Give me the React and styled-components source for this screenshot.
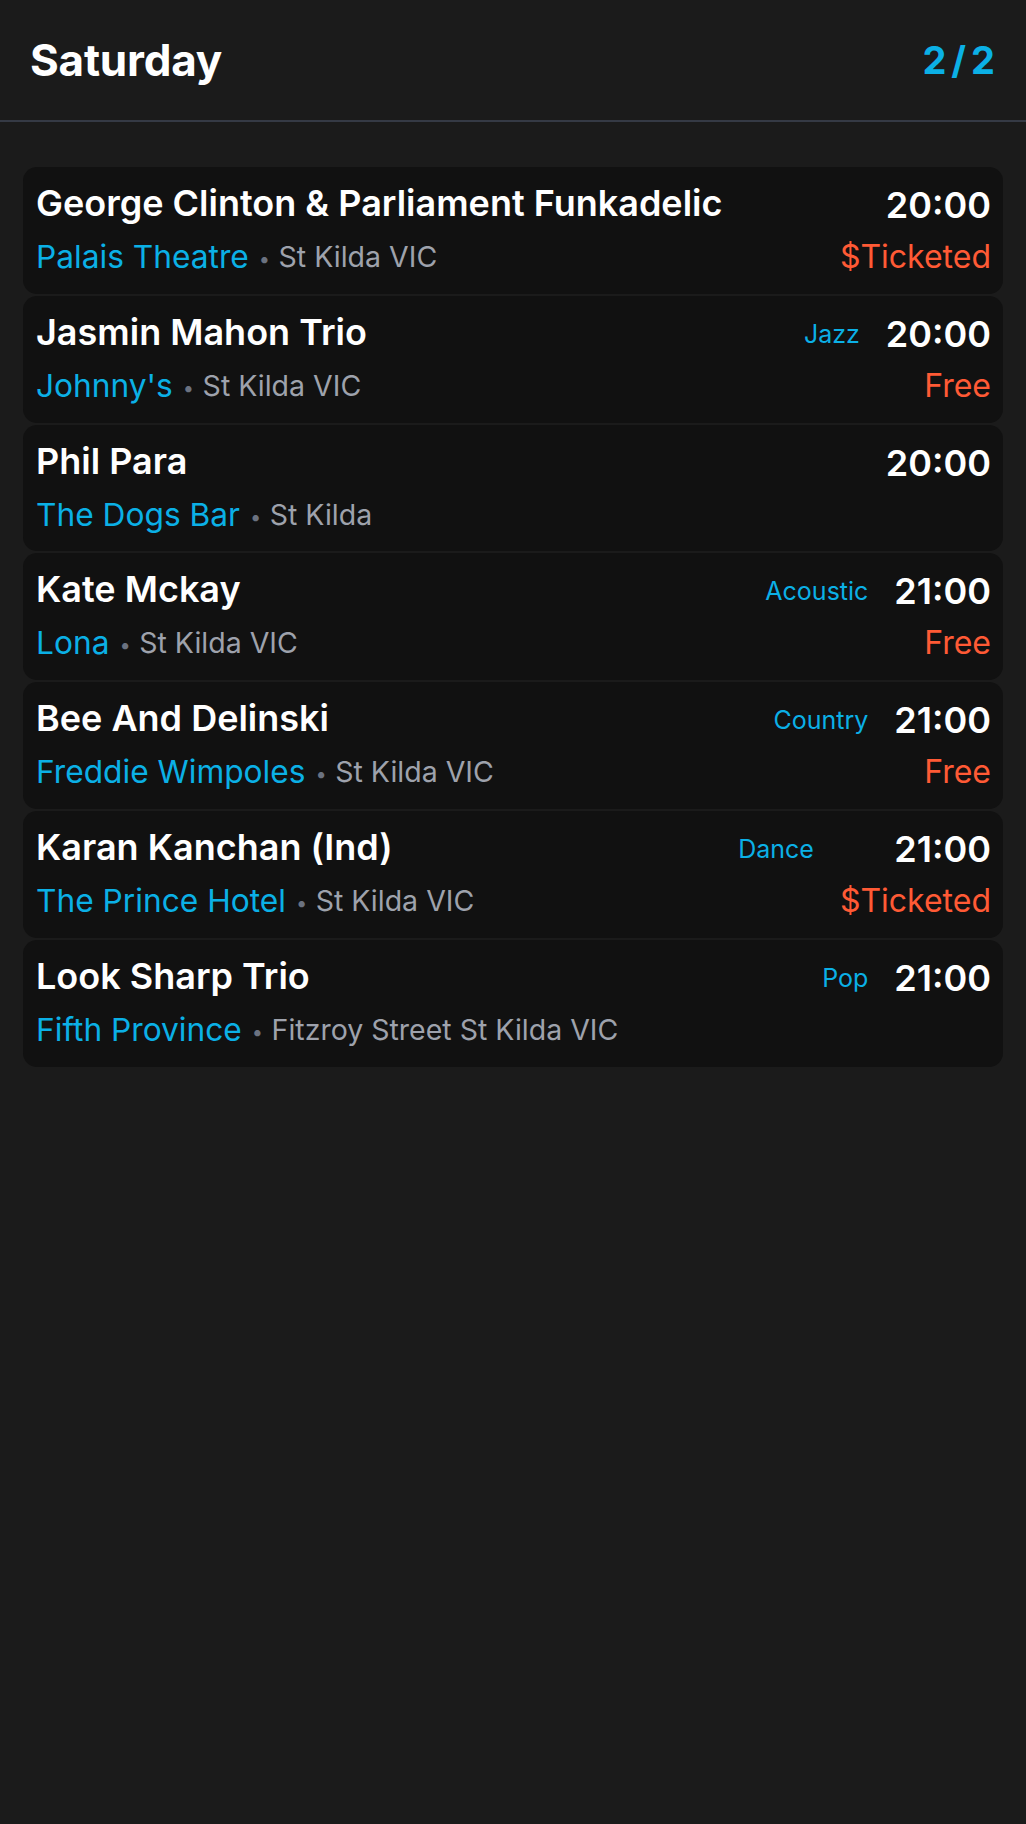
import React from 'react';
import styled, { createGlobalStyle } from 'styled-components';

const GlobalStyle = createGlobalStyle`
  html, body {
    margin: 0;
    padding: 0;
    background: #1b1b1b;
  }
  body {
    font-family: Inter, "Noto Sans", sans-serif;
    color: #ffffff;
    -webkit-font-smoothing: antialiased;
  }
`;

const Page = styled.div`
  min-height: 1824px;
  background: #1b1b1b;
`;

const Header = styled.header`
  display: flex;
  align-items: center;
  justify-content: space-between;
  height: 120px;
  padding: 0 31px 0 30px;
  border-bottom: 2px solid #353a45;
`;

const DayTitle = styled.h1`
  margin: 0;
  font-size: 44px;
  font-weight: 700;
  letter-spacing: -0.2px;
`;

const PageCount = styled.div`
  font-size: 38px;
  font-weight: 700;
  word-spacing: -4px;
  color: #0bb0e6;
`;

const List = styled.main`
  display: flex;
  flex-direction: column;
  gap: 2px;
  padding: 45px 23px 0 23px;
`;

const Card = styled.article`
  display: grid;
  grid-template-columns: minmax(0, 1fr) auto auto;
  column-gap: 26px;
  row-gap: 5px;
  align-items: start;
  padding: 14px 12px 13.8px 13px;
  background: #111111;
  border-radius: 14px;
`;

const Artist = styled.div`
  grid-column: 1;
  grid-row: 1;
  font-size: 36px;
  line-height: 45px;
  font-weight: 600;
  white-space: nowrap;
`;

const Genre = styled.div`
  grid-column: 2;
  grid-row: 1;
  align-self: center;
  font-size: 25px;
  color: #0bb0e6;
`;

const Time = styled.div`
  grid-column: 3;
  grid-row: 1;
  justify-self: end;
  font-size: 36px;
  line-height: 48px;
  font-weight: 600;
`;

const Where = styled.div`
  grid-column: 1 / 3;
  grid-row: 2;
  display: flex;
  align-items: center;
  line-height: 42px;
  white-space: nowrap;
`;

const Venue = styled.span`
  font-size: 31.7px;
  color: #0bb0e6;
`;

const Dot = styled.span`
  margin: 4px 8.5px 0 10px;
  font-size: 20px;
  color: #6b7280;
`;

const Location = styled.span`
  font-size: 28.5px;
  color: #9ea2ac;
`;

const Price = styled.div`
  grid-column: 3;
  grid-row: 2;
  justify-self: end;
  font-size: 32px;
  line-height: 45px;
  color: #ff5a35;
`;

const gigs = [
  { artist: 'George Clinton & Parliament Funkadelic', venue: 'Palais Theatre', place: 'St Kilda VIC', time: '20:00', price: '$Ticketed' },
  { artist: 'Jasmin Mahon Trio', genre: 'Jazz', venue: "Johnny's", place: 'St Kilda VIC', time: '20:00', price: 'Free' },
  { artist: 'Phil Para', venue: 'The Dogs Bar', place: 'St Kilda', time: '20:00' },
  { artist: 'Kate Mckay', genre: 'Acoustic', venue: 'Lona', place: 'St Kilda VIC', time: '21:00', price: 'Free' },
  { artist: 'Bee And Delinski', genre: 'Country', venue: 'Freddie Wimpoles', place: 'St Kilda VIC', time: '21:00', price: 'Free' },
  { artist: 'Karan Kanchan (Ind)', genre: 'Dance', venue: 'The Prince Hotel', place: 'St Kilda VIC', time: '21:00', price: '$Ticketed' },
  { artist: 'Look Sharp Trio', genre: 'Pop', venue: 'Fifth Province', place: 'Fitzroy Street St Kilda VIC', time: '21:00' },
];

function GigCard({ gig }) {
  return (
    <Card>
      <Artist>{gig.artist}</Artist>
      {gig.genre && <Genre>{gig.genre}</Genre>}
      <Time>{gig.time}</Time>
      <Where>
        <Venue>{gig.venue}</Venue>
        <Dot>•</Dot>
        <Location>{gig.place}</Location>
      </Where>
      {gig.price && <Price>{gig.price}</Price>}
    </Card>
  );
}

export default function App() {
  return (
    <Page>
      <GlobalStyle />
      <Header>
        <DayTitle>Saturday</DayTitle>
        <PageCount>2 / 2</PageCount>
      </Header>
      <List>
        {gigs.map((gig) => (
          <GigCard key={gig.artist} gig={gig} />
        ))}
      </List>
    </Page>
  );
}
